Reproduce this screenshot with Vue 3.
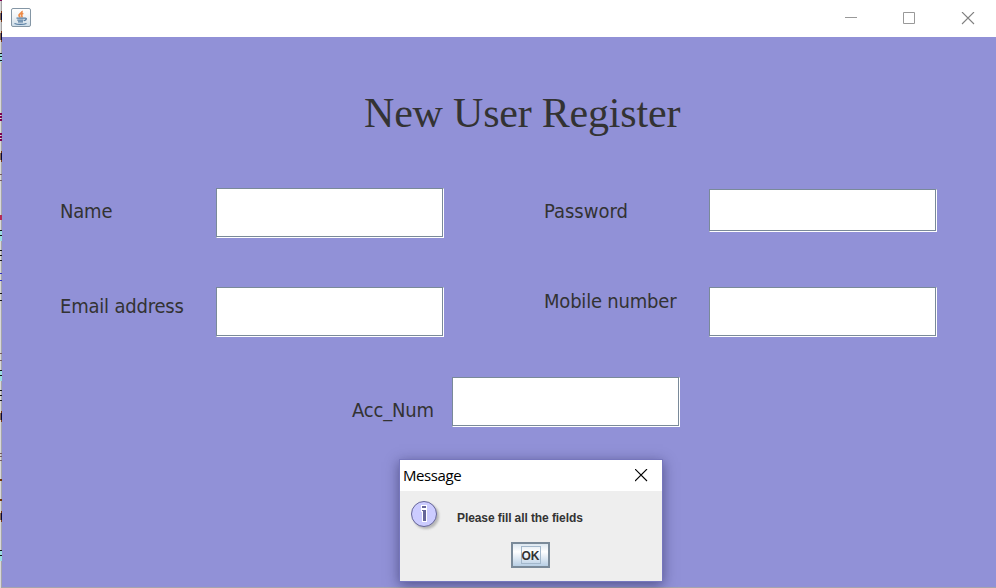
<script setup>
const rows = [
  { key: 'main', fields: [
    { id: 'name', label: 'Name', cls: 'name' },
    { id: 'password', label: 'Password', cls: 'password' },
  ] },
  { key: 'contact', fields: [
    { id: 'email', label: 'Email address', cls: 'email' },
    { id: 'mobile', label: 'Mobile number', cls: 'mobile' },
  ] },
  { key: 'account', fields: [{ id: 'account', label: 'Acc_Num', cls: 'account' }] },
]
</script>

<template>
  <div class="screen">
    <svg class="edge" width="2" height="588" shape-rendering="crispEdges">
      <rect width="1" height="588" fill="#d8d8d8" />
      <rect x="1" width="1" height="588" fill="#a5a5a8" />
      <path d="M0 0h2" stroke="#7c0050" stroke-width="2" />
      <path d="M0 114h2M0 117h2M0 120h2M0 134h2M0 137h2M0 140h2" stroke="#7c0050" stroke-width="2" />
      <path d="M1.500 11v11M1.500 31v11M1.500 151v11M1.500 411v11M1.500 511v11" stroke="#7a3510" />
      <path d="M1.500 13v7M1.500 33v7M1.500 153v7M1.500 413v7M1.500 513v7" stroke="#080838" />
      <path d="M.5 13v7M.5 33v7M.5 153v7M.5 413v7M.5 513v7" stroke="#8a6a50" />
      <path d="M0 174.500h2M0 180.500h2M0 353.500h2M0 360.500h2M0 453.500h2M0 456.500h2M0 460.500h2" stroke="#755c60" />
      <path d="M1 215v5" stroke="#b52a55" stroke-width="2" />
      <path d="M1 54v8M1 230v11M1 371v10M1 551v10" stroke="#98dce0" stroke-width="2" />
      <path d="M0 53.500h2M0 56.500h2M0 60.500h2M0 230.500h2M0 235.500h2M0 250.500h2M0 255.500h2M0 260.500h2M0 293.500h2M0 300.500h2M0 370.500h2M0 375.500h2M0 390.500h2M0 395.500h2M0 400.500h2M0 550.500h2M0 555.500h2" stroke="#151515" />
      <path d="M0 273.500h2M0 280.500h2" stroke="#3030c0" />
      <path d="M0 480h2M0 500h2" stroke="#703000" stroke-width="2" />
    </svg>

    <main class="window">
      <header class="titlebar">
        <svg class="java" width="20" height="20" viewBox="0 0 20 20">
          <defs>
            <linearGradient id="tile" x2="0" y2="1">
              <stop offset="0" stop-color="#fff" />
              <stop offset=".5" stop-color="#eef2f5" />
              <stop offset="1" stop-color="#cbdce8" />
            </linearGradient>
          </defs>
          <rect x=".5" y=".5" width="19" height="18" rx="1.500" fill="url(#tile)" stroke="#8496a5" />
          <path d="M10.800 3c1.200 2-3.600 2.800-2.800 4.600.3.700 1 1.100 1 1.900M12.300 5.300c-2.200 1-2 1.900-1.400 2.600.4.500.1 1-.4 1.500" fill="none" stroke="#ee8a45" stroke-width="1.700" />
          <path d="M5.500 10.200h8M6.300 12.100h6.200M7 13.800h5M3.500 15.500c3 1.300 9 1.300 12 0M13.300 10.200c3-.6 2.500 1.800-.3 2.500" fill="none" stroke="#547ba0" stroke-width="1.300" />
        </svg>
        <svg class="controls" width="130" height="14" viewBox="0 0 130 14" fill="none" stroke="#999">
          <path d="M0 5.500h12" />
          <path d="M58.500.500h11v11h-11z" />
          <path d="M117 0l12 12M129 0l-12 12" stroke="#808080" stroke-width="1.100" />
        </svg>
      </header>

      <form class="form" @submit.prevent>
        <h1>New User Register</h1>
        <div v-for="row in rows" :key="row.key" class="row" :class="row.key">
          <div v-for="field in row.fields" :key="field.id" class="field" :class="field.cls">
            <label :for="field.id"><span>{{ field.label }}</span></label>
            <div class="box"><input :id="field.id" /></div>
          </div>
        </div>
      </form>
    </main>

    <section class="dialog" role="dialog">
      <header class="dialog-title">
        <span>Message</span>
        <svg width="13" height="13" viewBox="0 0 13 13" stroke="#000" stroke-width="1.100"><path d="M0 0l12 12M12 0l-12 12" /></svg>
      </header>
      <div class="dialog-body">
        <svg class="info" width="32" height="32" viewBox="0 0 32 32">
          <defs>
            <filter id="soft"><feGaussianBlur stdDeviation="1" /></filter>
          </defs>
          <circle cx="16" cy="16" r="13" fill="#999" opacity=".65" filter="url(#soft)" />
          <circle cx="14" cy="14" r="12.500" fill="#ccccff" stroke="#666699" />
          <path d="M11 5h6v17h-5v-10h-1z" fill="#fff" />
          <path d="M12 6h4v2h-4zM12 10h4v11h-3v-10h-1z" fill="#666699" />
        </svg>
        <p>Please fill all the fields</p>
        <button type="button"><span>OK</span></button>
      </div>
    </section>
  </div>
</template>

<style>
body { overflow: hidden; }
</style>

<style scoped>
* { box-sizing: border-box; }
.screen { position: relative; display: flex; width: 996px; height: 588px; background: #9191d7; overflow: hidden; }
.edge { flex: none; display: block; }
.window { flex: 1; display: flex; flex-direction: column; border-bottom: 1px solid #a5a5ad; }
.titlebar { height: 37px; flex: none; background: #fff; display: flex; justify-content: space-between; padding: 8px 21px 0 9px; }
.controls { margin-top: 4px; }
.form { display: flex; flex-direction: column; padding-left: 58px; }
h1 { margin: 51px 0 0 304px; height: 50px; font: 400 42px/50px "Liberation Serif", serif; letter-spacing: -.2px; color: #333; white-space: nowrap; }
.row { display: flex; align-items: flex-start; }
.main { margin-top: 50px; height: 50px; }
.contact { margin-top: 49px; }
.account.row { margin-top: 40px; padding-left: 292px; }
.field { display: flex; }
.name, .email { width: 484px; }
label { width: 156px; flex: none; color: #333; font: 20px/24px "DejaVu Sans Condensed", "DejaVu Sans", sans-serif; font-stretch: condensed; letter-spacing: -.2px; white-space: nowrap; padding-top: 11px; }
.password label, .mobile label { width: 165px; }
.account label { width: 100px; }
.password { margin-top: 1px; }
.password label { padding-top: 10px; letter-spacing: 0; }
.email label { padding-top: 7px; }
.mobile label { padding-top: 2px; }
.account label { padding-top: 21px; }
.box { width: 228px; height: 50px; border: solid; border-width: 1px; border-color: #7a8a99 #fff #fff #7a8a99; }
.password .box { height: 43px; }
input { display: block; width: 100%; height: 100%; margin: 0; padding: 2px; border: solid; border-width: 0 1px 1px 0; border-color: #7a8a99; border-radius: 0; background: #fff; outline: 0; }
.dialog { position: absolute; left: 399px; top: 459px; width: 264px; height: 123px; border: 1px solid #7676bd; background: #eee; box-shadow: 0 3px 12px rgba(20, 20, 60, .5); }
.dialog-title { height: 31px; background: #fff; display: flex; justify-content: space-between; align-items: center; padding: 0 14px 0 3px; font: 15px/31px "Open Sans", sans-serif; letter-spacing: -.4px; color: #000; }
.dialog-body { display: grid; grid-template-columns: 57px 1fr; grid-template-rows: 51px 26px; height: 90px; }
.info { margin: 9px 0 0 10px; }
p { margin: 19px 0 0; font: bold 12px/16px "Liberation Sans", sans-serif; letter-spacing: -.09px; color: #333; white-space: nowrap; }
button { grid-column: 1 / 3; justify-self: start; margin-left: 111px; width: 39px; height: 26px; padding: 0; border: 2px solid #7a8a99; border-radius: 0; background: linear-gradient(#dce7f0, #fff 35%, #b8cfe5); font: bold 12px/16px "Liberation Sans", sans-serif; color: #333; display: flex; align-items: center; justify-content: center; }
button span { border: 1px solid #a3b8cc; width: 20px; height: 18px; line-height: 18px; display: flex; justify-content: center; }
</style>
